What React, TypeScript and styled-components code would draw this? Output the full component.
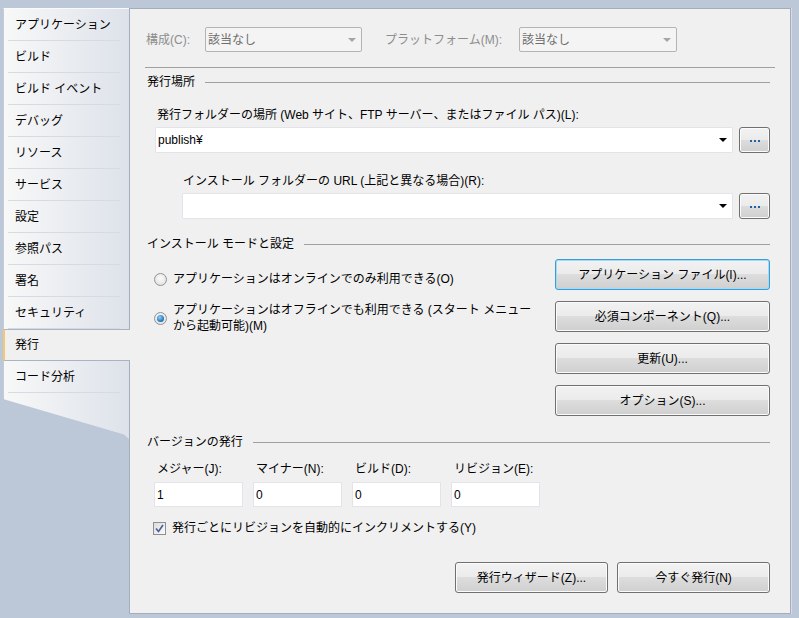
import React from "react";
import styled, { createGlobalStyle } from "styled-components";

// ______________________________________________________
// 全体

const GlobalStyle = createGlobalStyle`
  html, body {
    margin: 0;
    padding: 0;
    background: #bcc7d7;
  }
  body {
    font-family: "Liberation Sans", "Noto Sans CJK JP", sans-serif;
    font-size: 12px;
    line-height: 16px;
    color: #000;
  }
`;

const Frame = styled.div`
  display: flex;
  width: 799px;
  height: 618px;
  box-sizing: border-box;
  padding: 8px 8px 4px 3px;
  background: #bcc7d7;
`;

// ______________________________________________________
// サイドバー

const Sidebar = styled.div`
  flex: none;
  width: 126px;
  display: flex;
  flex-direction: column;
  align-self: flex-start;
`;

const TabList = styled.div`
  display: flex;
  flex-direction: column;
  background: linear-gradient(to right, #f8f8f8, #dde2ea);
  border-left: 1px solid #c2cbd8;
  border-top: 1px solid #fafafa;
`;

const Tab = styled.div<{ $active?: boolean }>`
  height: 32px;
  box-sizing: border-box;
  display: flex;
  align-items: center;
  padding-left: ${(p) => (p.$active ? "10px" : "11px")};
  white-space: nowrap;
  ${(p) =>
    p.$active
      ? `
    position: relative;
    z-index: 1;
    margin-right: -1px;
    margin-left: -1px;
    background: #f0f0f0;
    border-top: 1px solid #a9b3c2;
    border-bottom: 1px solid #a9b3c2;
    border-left: 2px solid #f3c870;
  `
      : `
    background: linear-gradient(#d6dbe3, #d6dbe3) no-repeat 4px 100% / calc(100% - 13px) 1px;
  `}
`;

const SidebarTail = styled.div`
  height: 46px;
  background: linear-gradient(to right, #f8f8f8, #dde2ea);
  border-left: 1px solid #c2cbd8;
  clip-path: polygon(0 0, 100% 0, 100% 100%, 96% 90%, 0 13%);
`;

// ______________________________________________________
// パネル

const Panel = styled.div`
  flex: 1;
  display: flex;
  flex-direction: column;
  background: #f0f0f0;
  border: 1px solid #a3adbb;
  box-shadow: 1px 0 0 #d7dde6;
  padding: 0 20px 0 16px;
`;

const Row = styled.div<{ $top: number; $indent?: number }>`
  display: flex;
  align-items: center;
  margin-top: ${(p) => p.$top}px;
  margin-left: ${(p) => p.$indent ?? 0}px;
`;

const Label = styled.span<{ $disabled?: boolean; $gap?: number }>`
  white-space: nowrap;
  color: ${(p) => (p.$disabled ? "#8d8d8d" : "#000")};
  margin-left: ${(p) => p.$gap ?? 0}px;
`;

const TextLine = styled.div<{ $top: number; $indent?: number }>`
  margin-top: ${(p) => p.$top}px;
  padding-left: ${(p) => p.$indent ?? 1}px;
  white-space: nowrap;
`;

const Combo = styled.div<{ $disabled?: boolean; $width?: number; $gap?: number }>`
  position: relative;
  box-sizing: border-box;
  display: flex;
  align-items: center;
  height: ${(p) => (p.$disabled ? 25 : 26)}px;
  ${(p) => (p.$width ? `width: ${p.$width}px;` : "flex: 1;")}
  margin-left: ${(p) => p.$gap ?? 0}px;
  padding-left: 2px;
  background: ${(p) => (p.$disabled ? "#f4f4f4" : "#fff")};
  border: 1px solid ${(p) => (p.$disabled ? "#b4b4b4" : "#e3e4ea")};
  border-radius: ${(p) => (p.$disabled ? 2 : 1)}px;
  color: ${(p) => (p.$disabled ? "#6d6d6d" : "#000")};
`;

const ComboArrow = styled.span<{ $disabled?: boolean }>`
  margin-left: auto;
  margin-right: 5px;
  width: 0;
  height: 0;
  border-left: 4px solid transparent;
  border-right: 4px solid transparent;
  border-top: 4px solid ${(p) => (p.$disabled ? "#a5a5a5" : "#000")};
`;

const BrowseButton = styled.div`
  flex: none;
  box-sizing: border-box;
  width: 31px;
  height: 26px;
  margin-left: 6px;
  display: flex;
  align-items: center;
  justify-content: center;
  gap: 2px;
  border: 1px solid #707070;
  border-radius: 3px;
  background: linear-gradient(#f2f2f2 0%, #ebebeb 50%, #dddddd 50%, #cfcfcf 100%);
  box-shadow: inset 0 0 0 1px #fbfbfb;
  padding-top: 2px;
`;

const Dot = styled.span`
  width: 2px;
  height: 2px;
  background: #1c63a8;
`;

const Rule = styled.div<{ $top: number }>`
  margin: ${(p) => p.$top}px -5px 0 -1px;
  height: 1px;
  background: #a0a0a0;
`;

const SectionHeader = styled.div<{ $top: number }>`
  display: flex;
  align-items: center;
  gap: 10px;
  margin-top: ${(p) => p.$top}px;
  padding-left: 1px;
  white-space: nowrap;
  &::after {
    content: "";
    flex: 1;
    height: 1px;
    background: #a0a0a0;
  }
`;

// ______________________________________________________
// インストール モード

const InstallArea = styled.div`
  display: flex;
  margin-top: 7px;
`;

const RadioList = styled.div`
  flex: 1;
  display: flex;
  flex-direction: column;
  gap: 15px;
  padding: 12px 0 0 8px;
`;

const RadioRow = styled.div`
  display: flex;
  align-items: center;
  gap: 6px;
  white-space: nowrap;
`;

const Radio = styled.span<{ $checked?: boolean }>`
  flex: none;
  box-sizing: border-box;
  width: 13px;
  height: 13px;
  border-radius: 50%;
  border: 1px solid #939393;
  background: radial-gradient(circle at 50% 40%, #fbfbfb, #dcdcdc);
  display: flex;
  align-items: center;
  justify-content: center;
  &::after {
    content: "";
    display: ${(p) => (p.$checked ? "block" : "none")};
    width: 7px;
    height: 7px;
    border-radius: 50%;
    background: radial-gradient(circle at 40% 35%, #8fd3f6, #1a6fb4 70%, #0d4f8a);
  }
`;

const ButtonColumn = styled.div`
  flex: none;
  width: 215px;
  display: flex;
  flex-direction: column;
  gap: 11px;
`;

const PushButton = styled.div<{ $focused?: boolean; $width?: number }>`
  box-sizing: border-box;
  height: 31px;
  ${(p) => (p.$width ? `width: ${p.$width}px;` : "")}
  display: flex;
  align-items: center;
  justify-content: center;
  white-space: nowrap;
  border: 1px solid ${(p) => (p.$focused ? "#3c9ad6" : "#707070")};
  border-radius: 3px;
  background: linear-gradient(#f2f2f2 0%, #ebebeb 50%, #dddddd 50%, #cfcfcf 100%);
  box-shadow: inset 0 0 0 1px ${(p) => (p.$focused ? "#9fdcf6" : "#fbfbfb")};
`;

// ______________________________________________________
// バージョン

const VersionGrid = styled.div`
  display: grid;
  grid-template-columns: repeat(4, 89px);
  column-gap: 10px;
  margin-top: 11px;
  padding-left: 8px;
`;

const VersionLabel = styled.div`
  padding-left: 3px;
  white-space: nowrap;
`;

const TextBox = styled.div`
  box-sizing: border-box;
  height: 25px;
  margin-top: 5px;
  display: flex;
  align-items: center;
  padding-left: 2px;
  background: #fff;
  border: 1px solid #e3e4ea;
`;

const CheckRow = styled.label`
  display: flex;
  align-items: center;
  gap: 6px;
  margin-top: 13px;
  padding-left: 7px;
  white-space: nowrap;
`;

const CheckBox = styled.span`
  flex: none;
  box-sizing: border-box;
  width: 13px;
  height: 13px;
  border: 1px solid #8e8f8f;
  background: linear-gradient(135deg, #dcdcdc, #fbfbfb);
  display: flex;
  align-items: center;
  justify-content: center;
`;

const Footer = styled.div`
  display: flex;
  justify-content: flex-end;
  gap: 9px;
  margin-top: 26px;
`;

// ______________________________________________________
// データ

const tabs = [
  "アプリケーション",
  "ビルド",
  "ビルド イベント",
  "デバッグ",
  "リソース",
  "サービス",
  "設定",
  "参照パス",
  "署名",
  "セキュリティ",
  "発行",
  "コード分析",
];

const versions = [
  { label: "メジャー(J):", value: "1" },
  { label: "マイナー(N):", value: "0" },
  { label: "ビルド(D):", value: "0" },
  { label: "リビジョン(E):", value: "0" },
];

const installButtons = [
  "アプリケーション ファイル(I)...",
  "必須コンポーネント(Q)...",
  "更新(U)...",
  "オプション(S)...",
];

const Dots = () => (
  <BrowseButton>
    <Dot />
    <Dot />
    <Dot />
  </BrowseButton>
);

// ______________________________________________________
// コンポーネント

const App = () => (
  <>
    <GlobalStyle />
    <Frame>
      <Sidebar>
        <TabList>
          {tabs.map((t) => (
            <Tab key={t} $active={t === "発行"}>
              {t}
            </Tab>
          ))}
        </TabList>
        <SidebarTail />
      </Sidebar>

      <Panel>
        <Row $top={18}>
          <Label $disabled>構成(C):</Label>
          <Combo $disabled $width={157} $gap={15}>
            該当なし
            <ComboArrow $disabled />
          </Combo>
          <Label $disabled $gap={23}>
            プラットフォーム(M):
          </Label>
          <Combo $disabled $width={158} $gap={17}>
            該当なし
            <ComboArrow $disabled />
          </Combo>
        </Row>

        <Rule $top={15} />

        <SectionHeader $top={6}>発行場所</SectionHeader>
        <TextLine $top={17} $indent={11}>
          発行フォルダーの場所 (Web サイト、FTP サーバー、またはファイル パス)(L):
        </TextLine>
        <Row $top={4} $indent={9}>
          <Combo>
            publish¥
            <ComboArrow />
          </Combo>
          <Dots />
        </Row>
        <TextLine $top={20} $indent={37}>
          インストール フォルダーの URL (上記と異なる場合)(R):
        </TextLine>
        <Row $top={4} $indent={36}>
          <Combo>
            <ComboArrow />
          </Combo>
          <Dots />
        </Row>

        <SectionHeader $top={17}>インストール モードと設定</SectionHeader>
        <InstallArea>
          <RadioList>
            <RadioRow>
              <Radio />
              アプリケーションはオンラインでのみ利用できる(O)
            </RadioRow>
            <RadioRow>
              <Radio $checked />
              <span>
                アプリケーションはオフラインでも利用できる (スタート メニュー
                <br />
                から起動可能)(M)
              </span>
            </RadioRow>
          </RadioList>
          <ButtonColumn>
            {installButtons.map((b, i) => (
              <PushButton key={b} $focused={i === 0}>
                {b}
              </PushButton>
            ))}
          </ButtonColumn>
        </InstallArea>

        <SectionHeader $top={18}>バージョンの発行</SectionHeader>
        <VersionGrid>
          {versions.map((v) => (
            <VersionLabel key={v.label}>{v.label}</VersionLabel>
          ))}
          {versions.map((v) => (
            <TextBox key={v.label + "box"}>{v.value}</TextBox>
          ))}
        </VersionGrid>

        <CheckRow>
          <CheckBox>
            <svg width="9" height="9" viewBox="0 0 9 9">
              <path d="M1 4.5 L3.5 7.5 L8 1" fill="none" stroke="#4a5d95" strokeWidth="1.6" />
            </svg>
          </CheckBox>
          発行ごとにリビジョンを自動的にインクリメントする(Y)
        </CheckRow>

        <Footer>
          <PushButton $width={153}>発行ウィザード(Z)...</PushButton>
          <PushButton $width={153}>今すぐ発行(N)</PushButton>
        </Footer>
      </Panel>
    </Frame>
  </>
);

export default App;
